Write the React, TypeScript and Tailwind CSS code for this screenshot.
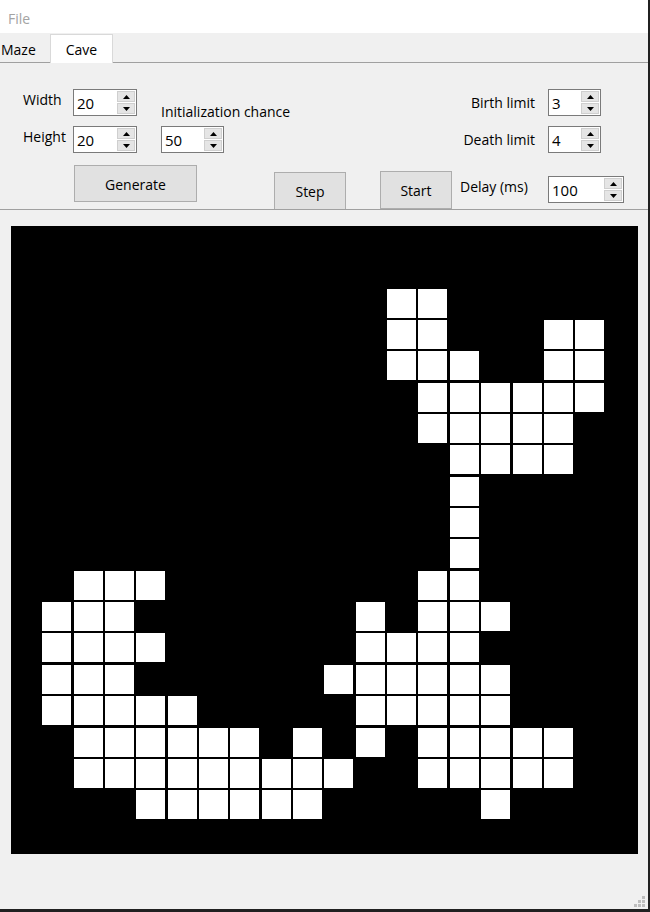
import React from "react";

const ROWS: string[] = [
  "....................",
  "....................",
  "............##......",
  "............##...##.",
  "............###..##.",
  ".............######.",
  ".............#####..",
  "..............####..",
  "..............#.....",
  "..............#.....",
  "..............#.....",
  "..###........##.....",
  ".###.......#.###....",
  ".####......####.....",
  ".###......######....",
  ".#####.....#####....",
  "..######.#.#.#####..",
  "..#########..#####..",
  "....######.....#....",
  "....................",
];

function Arrow({ up }: { up: boolean }) {
  return (
    <svg width="7" height="4" viewBox="0 0 7 4" className="block">
      {up ? <polygon points="3.5,0 7,4 0,4" fill="#000" /> : <polygon points="0,0 7,0 3.5,4" fill="#000" />}
    </svg>
  );
}

function Spin({ value, w }: { value: string; w: string }) {
  return (
    <div className={`flex h-[27px] ${w} items-center border border-[#7a7a7a] bg-white`}>
      <span className="flex-1 pl-[3px] pt-[1px] text-[15px] leading-[20px] text-black">{value}</span>
      <div className="mr-[1px] flex flex-col gap-[1px]">
        <div className="flex h-[11px] w-[18px] items-center justify-center border border-[#cfcfcf] bg-[#e5e5e5]">
          <Arrow up />
        </div>
        <div className="flex h-[11px] w-[18px] items-center justify-center border border-[#cfcfcf] bg-[#e5e5e5]">
          <Arrow up={false} />
        </div>
      </div>
    </div>
  );
}

function Btn({ label, cls }: { label: string; cls: string }) {
  return (
    <div className={`flex items-center justify-center border border-[#adadad] bg-[#e1e1e1] pt-[1px] text-[14px] text-black ${cls}`}>
      {label}
    </div>
  );
}

export default function App() {
  return (
    <div
      className="flex h-[912px] w-[650px] flex-col border-r-2 border-b-[3px] border-[#202020] bg-[#f0f0f0] text-black"
      style={{ fontFamily: '"Open Sans", "Noto Sans", sans-serif' }}
    >
      {/* menu bar */}
      <div className="flex h-[33px] items-center bg-white pl-[8px] pt-[3px] text-[14px] text-[#a3a3a3]">File</div>

      {/* tab strip */}
      <div className="flex h-[30px] items-end border-b border-[#a0a0a0] bg-[#f0f0f0] text-[14px]">
        <div className="flex h-[28px] w-[50px] items-center pl-[1px] pt-[2px]">Maze</div>
        <div className="relative z-10 mb-[-1px] flex h-[29px] w-[63px] items-center justify-center border border-b-0 border-[#d9d9d9] bg-white pt-[1px]">
          Cave
        </div>
      </div>

      {/* controls panel */}
      <div className="flex h-[147px] flex-col overflow-hidden border-b border-[#a0a0a0] text-[14px]">
        <div className="flex pt-[26px]">
          <div className="flex flex-col gap-[10px] pl-[23px]">
            <div className="flex items-start">
              <span className="mt-[1px] w-[50px] leading-[20px]">Width</span>
              <Spin value="20" w="w-[64px]" />
            </div>
            <div className="flex items-start">
              <span className="mt-[1px] w-[50px] leading-[20px]">Height</span>
              <Spin value="20" w="w-[64px]" />
            </div>
          </div>
          <div className="ml-[24px] flex flex-col">
            <span className="mt-[13px] leading-[20px]">Initialization chance</span>
            <div className="mt-[4px]">
              <Spin value="50" w="w-[63px]" />
            </div>
          </div>
          <div className="ml-auto flex flex-col gap-[10px] pr-[47px]">
            <div className="flex items-center justify-end gap-[13px]">
              <span className="leading-[20px]">Birth limit</span>
              <Spin value="3" w="w-[53px]" />
            </div>
            <div className="flex items-center justify-end gap-[13px]">
              <span className="leading-[20px]">Death limit</span>
              <Spin value="4" w="w-[53px]" />
            </div>
          </div>
        </div>
        <div className="mt-[12px] flex items-start">
          <Btn label="Generate" cls="ml-[74px] h-[37px] w-[123px]" />
          <Btn label="Step" cls="ml-[77px] mt-[7px] h-[38px] w-[72px]" />
          <Btn label="Start" cls="ml-[34px] mt-[6px] h-[38px] w-[72px]" />
          <span className="ml-[8px] mt-[12px] w-[88px] leading-[20px]">Delay (ms)</span>
          <div className="mt-[11px]">
            <Spin value="100" w="w-[76px]" />
          </div>
        </div>
      </div>

      {/* canvas */}
      <div className="pl-[11px] pt-[16px]">
        <div className="h-[628px] w-[627px] bg-black">
          <div className="grid grid-cols-[repeat(20,29px)] grid-rows-[repeat(20,29px)] gap-x-[2.35px] gap-y-[2.35px]">
            {ROWS.flatMap((row, r) =>
              row.split("").map((ch, c) => (
                <div key={`${r}-${c}`} className={ch === "#" ? "bg-white" : ""} />
              ))
            )}
          </div>
        </div>
      </div>

      {/* bottom with grip */}
      <div className="flex flex-1 items-end justify-end pb-[2px] pr-[3px]">
        <svg width="11" height="11" viewBox="0 0 11 11" className="block">
          <rect x="8" y="0" width="3" height="3" fill="#bdbdbd" />
          <rect x="4" y="4" width="3" height="3" fill="#bdbdbd" />
          <rect x="8" y="4" width="3" height="3" fill="#bdbdbd" />
          <rect x="0" y="8" width="3" height="3" fill="#bdbdbd" />
          <rect x="4" y="8" width="3" height="3" fill="#bdbdbd" />
          <rect x="8" y="8" width="3" height="3" fill="#bdbdbd" />
        </svg>
      </div>
    </div>
  );
}
